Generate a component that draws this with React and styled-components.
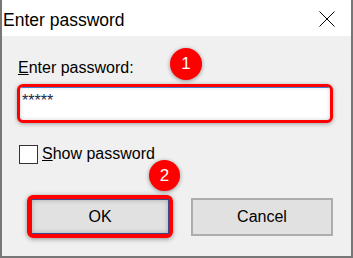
import styled, { createGlobalStyle } from "styled-components";

const GlobalStyle = createGlobalStyle`
    html, body {
        margin: 0;
        padding: 0;
        background: #f0f0f0;
    }
    * {
        box-sizing: border-box;
    }
`

const Window = styled.div`
    position: relative;
    width: 353px;
    height: 258px;
    display: flex;
    flex-direction: column;
    background: #f0f0f0;
    border: 2px solid #777;
    border-top: none;
    font-family: "Liberation Sans", Arial, sans-serif;
    color: #000;
    overflow: hidden;
`
const TitleBar = styled.div`
    height: 36px;
    flex-shrink: 0;
    display: flex;
    justify-content: space-between;
    align-items: flex-start;
    background: #fff;
    padding: 10px 16px 0 1px;
`
const Title = styled.div`
    font-size: 17.5px;
    line-height: 20px;
`
const CloseButton = styled.div`
    width: 16px;
    height: 16px;
    margin-top: 1px;
    display: flex;
`
const Body = styled.div`
    display: flex;
    flex-direction: column;
    align-items: flex-start;
    padding: 0 16px 0 15px;
`
const Label = styled.div`
    margin: 23px 0 0 1px;
    font-size: 16px;
    line-height: 17px;
`
const FieldRing = styled.div`
    margin-top: 8px;
    width: 316px;
    height: 39px;
    border: 3px solid #ff0000;
    border-radius: 6px;
    background: #fff;
    box-shadow: 0 1px 4px rgba(0, 0, 0, 0.35), inset 0 0 4px rgba(0, 0, 0, 0.18);
    overflow: hidden;
`
const Field = styled.div`
    height: 100%;
    padding: 3px 0 0 2px;
    font-size: 16px;
    line-height: 19px;
    color: #1a2a4a;
    border-top: 1px solid #3f7fd0;
`
const CheckRow = styled.label`
    margin: 22px 0 0 2px;
    display: flex;
    align-items: flex-start;
    gap: 4px;
    font-size: 16px;
    line-height: 18px;
`
const CheckBox = styled.span`
    width: 19px;
    height: 19px;
    border: 1px solid #333;
    background: #fff;
`
const ButtonRow = styled.div`
    margin: 34px 0 0 12px;
    display: flex;
    gap: 20px;
`
const ButtonRing = styled.div`
    margin: -3px -2px -2px -2px;
    border: 4px solid #ff0000;
    border-radius: 6px;
    box-shadow: 0 1px 5px rgba(0, 0, 0, 0.4);
    display: flex;
`
const Button = styled.button`
    width: ${p => (p.$ringed ? "138px" : "142px")};
    height: ${p => (p.$ringed ? "35px" : "38px")};
    margin: 0;
    padding: 0;
    background: #e1e1e1;
    border: 1px solid ${p => (p.$ringed ? "#3a4a8a" : "#adadad")};
    border-width: ${p => (p.$ringed ? "1px" : "2px")};
    box-shadow: ${p => (p.$ringed ? "inset 0 0 5px rgba(0, 0, 0, 0.25)" : "none")};
    font-family: "Liberation Sans", Arial, sans-serif;
    font-size: 16px;
    color: #000;
`
const Badge = styled.div`
    position: absolute;
    top: ${p => p.$top}px;
    left: ${p => p.$left}px;
    width: ${p => p.$size}px;
    height: ${p => p.$size}px;
    border-radius: 50%;
    background: #ff0000;
    box-shadow: 0 1px 4px rgba(0, 0, 0, 0.4);
    color: #fff;
    font-family: "Liberation Sans", Arial, sans-serif;
    font-size: 17px;
    display: flex;
    align-items: center;
    justify-content: center;
`

function App() {
    return (
        <>
            <GlobalStyle />
            <Window>
                <TitleBar>
                    <Title>Enter password</Title>
                    <CloseButton>
                        <svg width="16" height="16" viewBox="0 0 16 16">
                            <path d="M0.5 0.5 L15.5 15.5 M15.5 0.5 L0.5 15.5" stroke="#000" strokeWidth="1" fill="none" />
                        </svg>
                    </CloseButton>
                </TitleBar>
                <Body>
                    <Label><u>E</u>nter password:</Label>
                    <FieldRing>
                        <Field>*****</Field>
                    </FieldRing>
                    <CheckRow>
                        <CheckBox />
                        <span><u>S</u>how password</span>
                    </CheckRow>
                    <ButtonRow>
                        <ButtonRing>
                            <Button $ringed>OK</Button>
                        </ButtonRing>
                        <Button>Cancel</Button>
                    </ButtonRow>
                </Body>
                <Badge $top={48} $left={168} $size={32}>1</Badge>
                <Badge $top={160} $left={147} $size={31}>2</Badge>
            </Window>
        </>
    );
}

export default App;
